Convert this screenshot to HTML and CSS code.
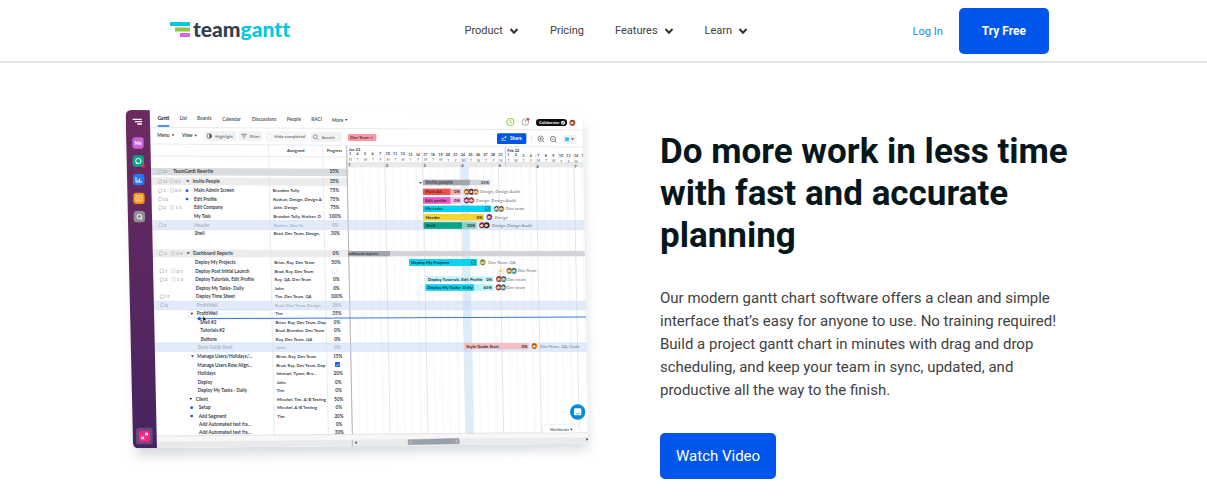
FILE: index.html
```html
<!DOCTYPE html>
<html lang="en">
<head>
    <meta charset="UTF-8">
    <meta name="viewport" content="width=device-width, initial-scale=1.0">
    <title>TeamGantt</title>
    <link rel="stylesheet" href="styles.css">
</head>
<body>

    <header class="site-header">
        <div class="header-inner">
            <a href="#" class="logo" aria-label="teamgantt">
                <svg class="logo-mark" viewBox="0 0 20 15" width="20" height="15" aria-hidden="true">
                    <rect x="0" y="0" width="20" height="4" fill="#00c8e0"/>
                    <rect x="5" y="5.5" width="15" height="4" fill="#8dc63f"/>
                    <rect x="10" y="11" width="10" height="4" fill="#d466e0"/>
                </svg>
                <span class="logo-text">team<span class="logo-accent">gantt</span></span>
            </a>
            <nav class="main-nav">
                <button type="button" class="nav-item">Product
                    <svg class="chevron" viewBox="0 0 10 8" width="10" height="8"><path d="M1.5 2 L5 5.7 L8.5 2"/></svg>
                </button>
                <a href="#" class="nav-item">Pricing</a>
                <button type="button" class="nav-item">Features
                    <svg class="chevron" viewBox="0 0 10 8" width="10" height="8"><path d="M1.5 2 L5 5.7 L8.5 2"/></svg>
                </button>
                <button type="button" class="nav-item">Learn
                    <svg class="chevron" viewBox="0 0 10 8" width="10" height="8"><path d="M1.5 2 L5 5.7 L8.5 2"/></svg>
                </button>
            </nav>
            <div class="account">
                <a href="#" class="login">Log In</a>
                <a href="#" class="btn btn-try">Try Free</a>
            </div>
        </div>
    </header>

    <main class="hero">
        <svg id="preview" class="preview" viewBox="0 0 1440 1110" role="img" aria-label="TeamGantt project plan">
            <defs>
                <linearGradient id="side" x1="0" y1="0" x2="0" y2="1">
                    <stop offset="0" stop-color="#6d2a62"/>
                    <stop offset="1" stop-color="#46245f"/>
                </linearGradient>
                <filter id="soft" x="-10%" y="-10%" width="120%" height="120%">
                    <feGaussianBlur stdDeviation="18"/>
                </filter>
                <clipPath id="frame">
                    <path d="M35 30 L1370 42 Q1387 43 1387 60 L1405 1012 Q1405 1030 1388 1031 L56 1045 Q40 1045 39 1030 L17 48 Q17 30 35 30 Z"/>
                </clipPath>
            </defs>
            <path d="M35 60 L1387 70 L1405 1048 L50 1068 Z" fill="#8d98a6" opacity=".35" filter="url(#soft)"/>
            <g id="board" clip-path="url(#frame)"></g>
        </svg>

        <section class="hero-copy">
            <h1>Do more work in less time with fast and accurate planning</h1>
            <p>Our modern gantt chart software offers a clean and simple interface that’s easy for anyone to use. No training required! Build a project gantt chart in minutes with drag and drop scheduling, and keep your team in sync, updated, and productive all the way to the finish.</p>
            <a href="#" class="btn btn-video">Watch Video</a>
        </section>
    </main>

    <script src="preview.js"></script>
</body>
</html>
```
FILE: styles.css
```css
* {
    box-sizing: border-box;
}
body {
    margin: 0;
    font-family: Roboto, "Liberation Sans", sans-serif;
    background-color: #fff;
    color: #414141;
}
a {
    text-decoration: none;
}

/* Header */
.site-header {
    border-bottom: 2px solid #e4e4e4;
}
.header-inner {
    display: flex;
    align-items: center;
    justify-content: space-between;
    max-width: 891px;
    margin: 0 auto;
    padding: 8px 0 7px 12px;
}
.logo {
    display: flex;
    align-items: center;
    gap: 3px;
    padding-bottom: 4px;
}
.logo-text {
    font-family: Lato, sans-serif;
    font-size: 21px;
    font-weight: 900;
    font-variant-ligatures: none;
    line-height: 24px;
    color: #333f50;
}
.logo-accent {
    color: #00c8e0;
}
.main-nav {
    display: flex;
    gap: 31px;
    padding-left: 10px;
}
.nav-item {
    display: flex;
    align-items: center;
    gap: 6px;
    padding: 0;
    border: none;
    background: none;
    font-family: inherit;
    font-size: 11px;
    line-height: 16px;
    color: #414141;
    cursor: pointer;
}
.chevron path {
    fill: none;
    stroke: #333;
    stroke-width: 2;
}
.account {
    display: flex;
    align-items: center;
    gap: 16px;
}
.login {
    font-size: 11px;
    color: #1689fb;
}
.btn {
    display: inline-block;
    border-radius: 5px;
    background-color: #0055eb;
    color: #fff;
    line-height: 46px;
}
.btn-try {
    padding: 0 23px;
    font-size: 12px;
    font-weight: bold;
}
.btn-video {
    padding: 0 16px;
    font-size: 15px;
}

/* Hero */
.hero {
    display: flex;
    align-items: flex-start;
    gap: 60px;
    max-width: 967px;
    margin: 0 auto;
    padding-top: 37px;
}
.preview {
    flex: 0 1 480px;
    min-width: 0;
    font-family: Lato, sans-serif;
    font-size: 14px;
    font-weight: bold;
}
.hero-copy {
    flex: 1;
    padding-top: 31px;
}
h1 {
    margin: 0 0 30px;
    font-size: 35px;
    line-height: 42px;
    color: #06171c;
}
.hero-copy p {
    margin: 0 0 31px;
    font-size: 15px;
    line-height: 23px;
}
```
FILE: preview.js
```js
const NS = 'http://www.w3.org/2000/svg';
const board = document.getElementById('board');

// the board leans to the right as it goes down
const SLOPE = 0.02;
const lean = (x, y) => x + (y - 100) * SLOPE;

function el(name, attrs, text) {
    const node = document.createElementNS(NS, name);
    for (const key in attrs) node.setAttribute(key, attrs[key]);
    if (text !== undefined) node.textContent = text;
    board.appendChild(node);
    return node;
}
function rect(x, y, w, h, fill, rx = 0) {
    return el('rect', { x, y, width: w, height: h, fill, rx });
}
function label(x, y, text, fill = '#454b54', size = 14, anchor = 'start') {
    return el('text', { x, y: y + 5, fill, 'font-size': size, 'text-anchor': anchor }, text);
}
function path(d, stroke, width = 1, fill = 'none') {
    return el('path', { d, stroke, 'stroke-width': width, fill });
}
function vline(x, y1, y2, stroke, width = 1) {
    path(`M${lean(x, y1)} ${y1} L${lean(x, y2)} ${y2}`, stroke, width);
}
function caret(x, y) {
    path(`M${x} ${y - 3} h8 l-4 6 Z`, 'none', 0, '#444');
}
function faces(x, y, colors) {
    colors.forEach((c, i) => {
        const cx = x + i * 14;
        el('circle', { cx, cy: y, r: 9, fill: c });
        el('circle', { cx: cx - 1, cy: y, r: 5, fill: '#f0c4a4' });
        path(`M${cx - 6} ${y - 2} Q${cx} ${y - 11} ${cx + 5} ${y - 2}`, '#33262b', 3);
        path(`M${cx - 4} ${y + 8} Q${cx} ${y + 4} ${cx + 4} ${y + 8}`, '#33262b', 2);
    });
}

path('M0 0 H1440 V1110 H0 Z', 'none', 0, '#fff');

// Band rows
path('M92 204 L682 206 L682 229 L92 226 Z', 'none', 0, '#d9dcdf');
path('M92 232 L682 234 L682 258 L92 255 Z', 'none', 0, '#ececec');
path('M98 448 L685 450 V472 L98 472 Z', 'none', 0, '#ececec');

// Timeline grid
rect(679, 186, 720, 16, '#e9e9ea');
for (let i = 0; i < 32; i++) {
    vline(679 + i * 22.7, 160, 1000, i % 5 === 0 ? '#dadadc' : '#eaeaec', i % 5 === 0 ? 2 : 1);
    if (i % 5 === 4) vline(684 + i * 22.7, 200, 1000, '#f3f3f4', 2);
}
path('M1023 173 L1045 173 L1062 1003 L1038 1003 Z', 'none', 0, '#dcecfb');
vline(679, 135, 1010, '#9a9ca0', 2);
vline(1155, 140, 200, '#b5b5b8', 2);

// Highlighted rows
[[362, 389], [604, 629], [729, 754]].forEach(([top, bottom]) => {
    rect(95, top, 1310, bottom - top, 'rgba(196, 216, 246, .5)');
    path(`M95 ${top} H1405 M95 ${bottom} H1405`, '#b4cdf3', 1);
});

// Table columns
[445, 607].forEach(x => vline(x, 132, 1005, '#dfe1e4', 2));
path('M90 82 L1390 90 M90 132 L1390 141 M90 168 L679 171', '#dcdfe2', 2);

// Tabs
[[113, 54, 'Gantt'], [179, 55, 'List'], [231, 56, 'Boards'], [307, 57, 'Calendar'], [396, 58, 'Discussions'],
 [500, 59, 'People'], [574, 59, 'RACI'], [636, 60, 'More']].forEach(([x, y, t], i) => {
    label(x, y, t, i === 0 ? '#17191d' : '#565b62');
});
caret(675, 60);
path('M113 78 H148', '#1e6fe8', 4);

// Toolbar
label(112, 106, 'Menu');
caret(155, 106);
label(186, 107, 'View');
caret(223, 107);
rect(253, 93, 96, 30, '#f0f2f4', 6);
rect(357, 94, 70, 29, '#f0f2f4', 6);
rect(436, 94, 128, 31, '#f5f6f8', 6);
rect(572, 96, 94, 30, '#f0f2f4', 6);
el('circle', { cx: 268, cy: 108, r: 7, fill: '#fff', stroke: '#555', 'stroke-width': 2 });
path('M268 101 A7 7 0 0 1 268 115 Z', 'none', 0, '#555');
path('M364 103 H380 M367 108 H377 M370 114 H374', '#555', 2);
el('circle', { cx: 449, cy: 110, r: 7, fill: '#fff', stroke: '#d6d9dd' });
el('circle', { cx: 586, cy: 110, r: 6, fill: 'none', stroke: '#666', 'stroke-width': 2 });
path('M591 115 L596 120', '#666', 2);
label(286, 108, 'Highlight', '#777c83', 13);
label(389, 108, 'Filter', '#777c83', 13);
label(463, 110, 'Hide completed', '#777c83', 13);
label(605, 112, 'Search', '#777c83', 13);
rect(684, 102, 85, 21, '#f79aa8', 3);
label(691, 112, 'Dev Team ×', '#5c3038', 13);

// Top right tools
el('circle', { cx: 1171, cy: 66, r: 11, fill: '#fff', stroke: '#8bcf3c', 'stroke-width': 3 });
path('M1171 59 V67 L1176 70', '#6fae2b', 2);
el('circle', { cx: 1216, cy: 66, r: 10, fill: '#fff', stroke: '#78808c', 'stroke-width': 2 });
label(1216, 66, '?', '#78808c', 14, 'middle');
el('circle', { cx: 1224, cy: 58, r: 4, fill: '#e8324a' });
rect(1248, 57, 93, 21, '#0c0d10', 10);
label(1257, 67, 'Collaborator', '#fff', 11);
el('circle', { cx: 1329, cy: 68, r: 6, fill: '#fff' });
path('M1326 68 L1328 71 L1332 65', '#111', 2);
faces(1357, 68, ['#c4492f']);
rect(1131, 100, 88, 32, '#0055e5', 4);
path('M1146 113 V121 H1158 M1149 117 Q1151 111 1159 111 M1155 108 L1159 111 L1156 115', '#fff', 2);
label(1170, 116, 'Share', '#fff');
path('M1235 105 V128', '#d7dadd', 2);
el('circle', { cx: 1262, cy: 116, r: 8, fill: 'none', stroke: '#555', 'stroke-width': 2 });
path('M1268 122 L1273 127 M1258 116 H1266 M1262 112 V120', '#555', 2);
el('circle', { cx: 1299, cy: 117, r: 8, fill: 'none', stroke: '#555', 'stroke-width': 2 });
path('M1305 123 L1310 128 M1295 117 H1303', '#555', 2);
rect(1327, 105, 43, 26, '#f0f2f4', 5);
rect(1335, 112, 12, 12, '#39c3ea', 3);
caret(1354, 118);

// Table header
label(527, 151, 'Assigned', '#3a4048', 13, 'middle');
label(643, 152, 'Progress', '#3a4048', 12, 'middle');

// [y, name x, name, assigned, progress, options]
const rows = [
    [215, 160, 'TeamGantt Rewrite', '', '35%', { chat: '22' }],
    [244, 218, 'Invite People', '', '35%', { chat: '31', list: '0/1', open: true }],
    [272, 222, 'Main Admin Screen', 'Brandon Tully', '75%', { chat: '3', list: '0/5', dot: true }],
    [297, 222, 'Edit Profile', 'Nathan, Design, Design A', '75%', { chat: '12', dot: true }],
    [323, 222, 'Edit Company', 'John, Design', '75%', { chat: '2', list: '1/3' }],
    [349, 222, 'My Task', 'Brandon Tully, Nathan, D', '100%', {}],
    [375, 223, 'Header', 'Nathan, Dev Te:', '0%', { chat: '3', dim: true }],
    [400, 224, 'Shell', 'Brad, Dev Team, Design,', '30%', {}],
    [460, 219, 'Dashboard Reports', '', '0%', { chat: '3', list: '2/6', open: true }],
    [487, 225, 'Deploy My Projects', 'Brian, Ray, Dev Team', '50%', {}],
    [513, 226, 'Deploy Post Initial Launch', 'Brad, Ray, Dev Team', '', { chat: '7', list: '0/1', box: true }],
    [539, 226, 'Deploy Tutorials, Edit Profile', 'Ray, QA, Dev Team', '0%', { chat: '2', list: '1/2' }],
    [564, 227, 'Deploy My Tasks- Daily', 'John', '0%', {}],
    [590, 228, 'Deploy Time Sheet', 'Tim, Dev Team, QA', '100%', { chat: '11' }],
    [615, 230, 'ProfitWell', 'Brad, Dev Team, Design,', '35%', { chat: '8', dim: true }],
    [641, 230, 'ProfitWell', 'Tim', '35%', { open: true }],
    [667, 240, 'Shell #2', 'Brian, Ray, Dev Team, Dep', '0%', {}],
    [692, 241, 'Tutorials #2', 'Brad, Brandon, Dev Team', '0%', {}],
    [717, 242, 'Buttons', 'Ray, Dev Team, QA', '0%', {}],
    [743, 233, 'Style Guide Start', 'John', '0%', { dim: true }],
    [769, 232, 'Manage Users/Holidays/...', 'Brian, Ray, Dev Team', '15%', { open: true }],
    [795, 232, 'Manage Users Row Align...', 'Brad, Ray, Dev Team, Dep', '', { checked: true }],
    [820, 233, 'Holidays', 'Ishmael, Tyson, Bra...', '20%', {}],
    [846, 233, 'Deploy', 'John', '0%', {}],
    [871, 233, 'Deploy My Tasks - Daily', 'Tim', '0%', {}],
    [897, 227, 'Client', 'Micahel, Tim, A/B Testing', '50%', { open: true }],
    [923, 236, 'Setup', 'Micahel, A/B Testing', '0%', { dot: true }],
    [948, 236, 'Add Segment', 'Tim', '20%', { dot: true }],
    [974, 237, 'Add Automated test fra...', '', '0%', {}],
    [998, 237, 'Add Automated test fra...', '', '30%', {}]
];

rows.forEach(([y, x, name, assigned, progress, o]) => {
    const color = o.dim ? '#a9b6c9' : '#3c424b';
    label(x, y, name, color);
    label(lean(455, y), y, assigned, color, 13);
    label(lean(640, y), y, progress, color, 14, 'middle');
    if (o.chat) {
        const cx = lean(117, y);
        el('circle', { cx, cy: y, r: 6, fill: 'none', stroke: '#b5b9bf', 'stroke-width': 2 });
        path(`M${cx - 6} ${y + 7} l4 -4`, '#b5b9bf', 2);
        label(cx + 9, y, o.chat, '#a7acb2', 12);
    }
    if (o.list) {
        const lx = lean(147, y);
        rect(lx, y - 6, 10, 11, 'none').setAttribute('stroke', '#b5b9bf');
        path(`M${lx + 2} ${y - 2} h6 M${lx + 2} ${y + 2} h6`, '#b5b9bf', 1);
        label(lx + 14, y, o.list, '#a7acb2', 12);
    }
    if (o.open) path(`M${x - 19} ${y - 3} h9 l-4.5 6 Z`, 'none', 0, '#333');
    if (o.dot) rect(x - 25, y - 4, 8, 8, '#1763e6', 3);
    if (o.box) rect(638, y - 7, 13, 13, '#fff', 2).setAttribute('stroke', '#c9cdd2');
    if (o.checked) {
        rect(645, y - 9, 15, 15, '#1763e6', 2);
        path(`M648 ${y - 1} l4 4 l6 -7`, '#fff', 2);
    }
});

// Row that is being dragged
rect(206, 630, 242, 24, 'none', 3).setAttribute('stroke', '#a9c8f7');
path('M232 656 L1400 651', '#3578e5', 3);
el('circle', { cx: 238, cy: 656, r: 5, fill: '#1763e6' });
path('M249 648 L249 664 L253 660 L257 663 L258 657 Z', '#fff', 1, '#111');

// Dates
label(686, 147, 'Jan 22', '#3a4048', 12);
label(1162, 151, 'Feb 22', '#3a4048', 12);
const dates = [3, 4, 5, 6, 7, 10, 11, 12, 13, 14, 17, 18, 19, 20, 21, 24, 25, 26, 27, 28, 31, 1, 2, 3, 4, 7, 8, 9, 10, 11, 14, 15];
dates.forEach((d, i) => {
    const x = 690 + i * 22.6;
    label(x, 160 + i * 0.2, d, '#3a4048', 11, 'middle');
    label(x + 1, 177 + i * 0.2, 'MTWTF'[i % 5], '#8b8f95', 10, 'middle');
    if (i % 5 === 0) label(x - 2, 194 + i * 0.15, i / 5 + 1, '#3a4048', 12, 'middle');
});

// Summary bars
path('M898 246 h8 l-4 5 Z', 'none', 0, '#333');
rect(909, 239, 202, 17, '#d3d4da', 4);
rect(909, 239, 141, 17, '#a2a4ae', 4);
label(917, 248, 'Invite people');
label(1107, 248, '35%', '#3a4048', 13, 'end');
rect(684, 453, 711, 16, '#d2d2da');
rect(684, 453, 126, 16, '#a1a2ad');
label(684, 460, 'ashboard reports', '#3a4048', 12);

// [x, y, width, done width, color, light color, name, progress, avatars, people, people x]
const bars = [
    [909, 275, 114, 82, '#fb4b4b', '#fdb3b5', 'Main Ad...', '0%', ['#f28a3a', '#5b3038', '#e9b68c'], 'Design, Design Audit', 1080],
    [909, 301, 114, 82, '#f553c3', '#fbbbe3', 'Edit profile', '0%', ['#ab3d8d', '#e05668'], 'Design, Design Audit', 1068],
    [909, 326, 204, 204, '#04d2ee', '#04d2ee', 'My tasks', 'check', ['#46bfd3', '#b6a347'], 'Dev team', 1158],
    [910, 351, 181, 181, '#f5d62e', '#f5d62e', 'Header', '0%', ['#7c4a9b'], 'Design', 1124],
    [911, 376, 158, 115, '#08a487', '#86cfc2', 'Shell', '30%', ['#e02d64', '#332a31'], 'Design, Design Audit', 1116],
    [867, 487, 204, 204, '#04d2ee', '#04d2ee', 'Deploy My Projects', 'check', ['#a3c65a'], 'Dev Team, QA', 1105],
    [917, 537, 203, 1, '#c9f5fb', '#c9f5fb', 'Deploy Tutorials, Edit Profile', '0%', ['#b74d3f', '#39b4ce'], 'Dev team', 1162],
    [916, 562, 203, 146, '#04d2ee', '#b4f3fb', 'Deploy My Tasks- Daily', '65%', ['#b74d3f', '#39b4ce'], 'Dev team', 1160],
    [1032, 738, 194, 1, '#f4bfc0', '#f4bfc0', 'Style Guide Start', '0%', ['#f28a1a'], 'Dev Team, QA, Code', 1260]
];

bars.forEach(([x, y, w, done, color, light, name, progress, avatars, people, px]) => {
    rect(x, y - 9, w, 19, light, 2);
    rect(x, y - 9, done, 19, color, 2);
    label(x + 7, y, name, '#25303a', 13);
    if (progress === 'check') {
        path(`M${x + w - 17} ${y - 6} h12 v12 h-12 Z M${x + w - 14} ${y} l3 3 l6 -7`, '#14727f', 2);
    } else {
        label(x + w - 3, y, progress, '#25303a', 13, 'end');
    }
    faces(x + w + 17, y, avatars);
    label(px, y, people, '#92969c', 13);
});

// Milestone
rect(1134, 505, 16, 16, '#fff', 3).setAttribute('stroke', '#f0a23c');
rect(1138, 509, 8, 8, '#fac36e', 2);
faces(1168, 512, ['#b6a347', '#46bfd3']);
label(1193, 512, 'Dev Team', '#92969c', 13);

// Bottom scrollbar
path('M110 1008 L1405 998 V1034 L110 1048 Z', 'none', 0, '#f7f7f8');
path('M110 1025 L1405 1012 V1034 L110 1048 Z', 'none', 0, '#e9eaeb');
path('M110 1008 L1405 997', '#d5d7d9', 2);
path('M864 1019 L1017 1015 L1018 1031 L865 1034 Z', '#8b949d', 1, '#98a1aa');
path('M872 1022 V1030 M1009 1019 V1027', '#d5dade', 3);
path('M697 1019 V1040', '#999', 2);
path('M710 1024 v8 l-6 -4 Z M1399 1014 v8 l6 -4 Z', 'none', 0, '#333');
path('M1265 1000 L1272 978 Q1274 974 1280 974 L1368 972 Q1374 972 1376 978 L1383 998 Z', '#e3e5e7', 2, '#fff');
label(1289, 989, 'Workloads', '#6c7178', 12);
caret(1350, 989);
el('circle', { cx: 1373, cy: 936, r: 23, fill: '#078bd6' });
rect(1362, 925, 22, 21, '#fff', 4);
path('M1366 940 Q1373 945 1380 940', '#078bd6', 2);

// Sidebar
path('M10 20 L89 20 L111 1050 L30 1060 Z', 'none', 0, 'url(#side)');
path('M38 58 L65 58 M45 65 L66 65 M52 72 L66 72', '#fff', 4);
rect(37, 112, 34, 34, '#c962d8', 9);
label(54, 129, 'Me', '#fff', 14, 'middle');
rect(38, 166, 34, 34, '#08a487', 9);
el('circle', { cx: 55, cy: 183, r: 8, fill: 'none', stroke: '#fff', 'stroke-width': 3 });
path('M48 191 l5 -3', '#fff', 3);
el('circle', { cx: 70, cy: 198, r: 5, fill: '#ec2d3c' });
rect(39, 222, 34, 34, '#2478f2', 9);
path('M48 231 V246 H66 M54 244 V239 M59 244 V236', '#fff', 3);
rect(40, 278, 34, 34, '#f7930c', 9);
path('M48 287 H66 V303 H48 Z M52 293 H62 M52 298 H60', '#fff', 2);
rect(41, 333, 34, 34, '#8f8f96', 9);
el('circle', { cx: 58, cy: 350, r: 7, fill: 'none', stroke: '#fff', 'stroke-width': 3 });
path('M61 354 L67 359', '#fff', 3);
rect(48, 983, 50, 50, '#6a477f', 8);
rect(57, 992, 33, 33, '#fb2583', 8);
path('M66 1016 L72 1010 M76 1006 L82 1000', '#fff', 4);
path('M64 1018 V1008 L74 1018 Z M84 998 V1008 L74 998 Z', 'none', 0, '#fff');
```
